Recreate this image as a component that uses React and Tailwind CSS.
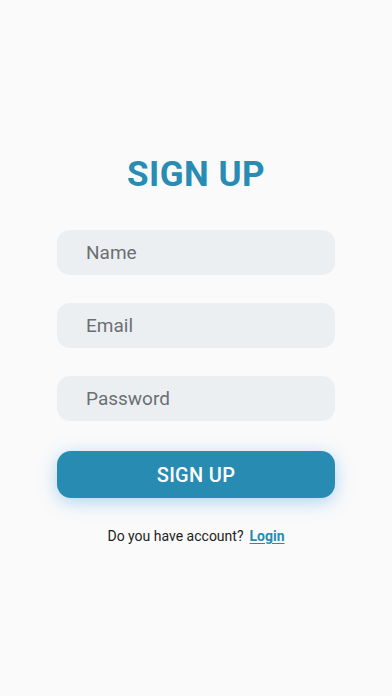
export default function App() {
  return (
    <div
      className="min-h-[696px] w-full bg-[#fafafa] flex flex-col items-center pt-[155px]"
      style={{ fontFamily: "Roboto, 'Noto Sans', sans-serif" }}
    >
      <h1 className="text-[35px] leading-[40px] font-bold text-[#288cb4] tracking-[0.5px]">
        SIGN UP
      </h1>

      <div className="mt-[35px] w-[278px] flex flex-col gap-[28px]">
        {["Name", "Email", "Password"].map((p) => (
          <input
            key={p}
            placeholder={p}
            className="h-[45px] w-full rounded-[13px] bg-[#eceff2] pl-[29px] text-[19px] text-[#333] placeholder:text-[#6b6f73] outline-none"
          />
        ))}
      </div>

      <button className="mt-[30px] w-[278px] h-[47px] rounded-[14px] bg-[#288bb1] text-white text-[20px] font-medium tracking-[0.3px] shadow-[0_4px_18px_rgba(40,140,230,0.35)]">
        SIGN UP
      </button>

      <div className="mt-[28px] flex items-center gap-[6px] text-[14px] text-[#222]">
        <span>Do you have account?</span>
        <a className="font-bold text-[#288bb1] underline underline-offset-2">Login</a>
      </div>
    </div>
  );
}
